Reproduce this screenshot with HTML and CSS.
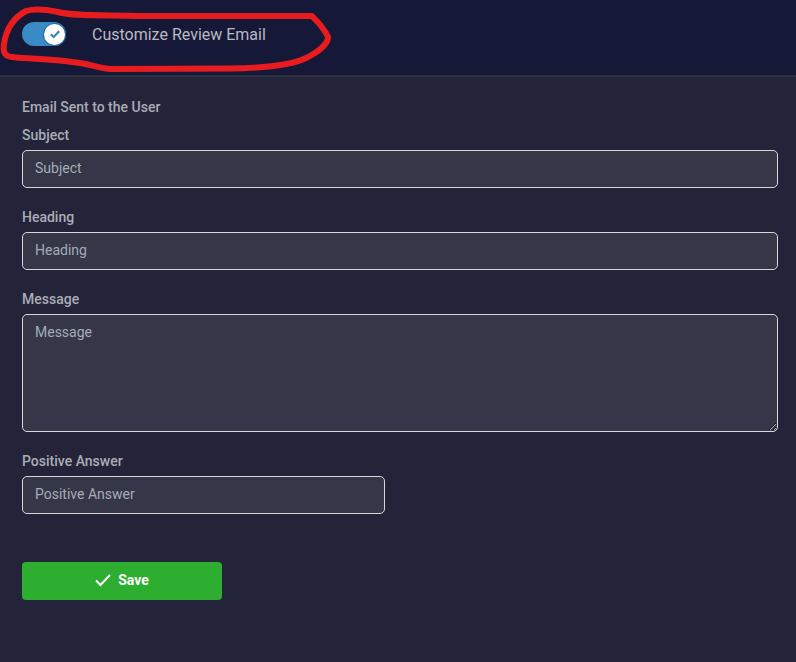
FILE: index.html
```
<!DOCTYPE html>
<html lang="en">
<head>
<meta charset="utf-8">
<title>Customize Review Email</title>
<link rel="stylesheet" href="styles.css">
</head>
<body>
<header class="top">
  <div class="switch">
    <span class="knob">
      <svg viewBox="0 0 12 12" width="12" height="12"><path d="M1.8 6.2 4.6 9 10.2 3.2" fill="none" stroke="#3a86bb" stroke-width="2.2"/></svg>
    </span>
  </div>
  <span class="top-title">Customize Review Email</span>
  <svg class="scribble" viewBox="0 0 340 76" width="340" height="76">
    <path d="M26 11C36 8 48 10 58 12C72 16 100 15 140 16L312 16C318 22 325 30 328 37C328 44 318 52 306 58C290 66 262 68 230 68.500L110 69C96 68 88 63 72 62C50 59 30 59 12 57C4 56 3 52 4 44C6 30 13 18 26 11Z" fill="none" stroke="#e81c1f" stroke-width="6" stroke-linejoin="round"/>
  </svg>
</header>
<main class="form">
  <h2 class="section">Email Sent to the User</h2>
  <div class="field">
    <label class="label" for="subject">Subject</label>
    <input class="input" id="subject" placeholder="Subject">
  </div>
  <div class="field">
    <label class="label" for="heading">Heading</label>
    <input class="input" id="heading" placeholder="Heading">
  </div>
  <div class="field">
    <label class="label" for="message">Message</label>
    <textarea class="input area" id="message" placeholder="Message"></textarea>
  </div>
  <div class="field">
    <label class="label" for="positive">Positive Answer</label>
    <input class="input half" id="positive" placeholder="Positive Answer">
  </div>
  <button class="save" type="button">
    <svg viewBox="0 0 16 14" width="16" height="14"><path d="M1 7.5 5.500 12 15 2" fill="none" stroke="#fff" stroke-width="2"/></svg>
    <span>Save</span>
  </button>
</main>
</body>
</html>
```
FILE: styles.css
```
* { box-sizing: border-box; }
html, body { margin: 0; height: 100%; }
body {
  background: #23243a;
  font-family: Roboto, "Liberation Sans", sans-serif;
  color: #abacb5;
  overflow: hidden;
}
.top {
  position: relative;
  height: 77px;
  background: #161838;
  border-bottom: 2px solid #2e2f43;
  display: flex;
  align-items: center;
  padding: 0 22px 7px;
  gap: 26px;
}
.switch {
  width: 44px;
  height: 24px;
  border-radius: 12px;
  background: #388bc4;
  display: flex;
  align-items: center;
  justify-content: flex-end;
  padding-right: 1px;
}
.knob {
  width: 21px;
  height: 21px;
  border-radius: 50%;
  background: #fff;
  box-shadow: 0 0 0 1px #2b6c9c;
  display: flex;
  align-items: center;
  justify-content: center;
}
.top-title { font-size: 16px; color: #b9bac3; }
.scribble { position: absolute; left: 0; top: 0; pointer-events: none; }
.form { padding: 22px 18px 0 22px; }
.section {
  margin: 0 0 12px;
  font-size: 14px;
  line-height: 16px;
  font-weight: 500;
  color: #abacb5;
}
.field { margin-bottom: 21px; display: flex; flex-direction: column; align-items: flex-start; }
.label {
  font-size: 14px;
  line-height: 16px;
  font-weight: 500;
  margin-bottom: 7px;
  color: #abacb5;
}
.input {
  display: block;
  width: 100%;
  height: 38px;
  background: #353647;
  border: 1px solid #d6d7dc;
  border-radius: 5px;
  padding: 0 12px 2px;
  font: 400 14px/20px Roboto, "Liberation Sans", sans-serif;
  color: #c0c1c9;
  outline: none;
}
.input::placeholder { color: #a3adb8; opacity: 1; }
.area { height: 118px; padding-top: 7px; margin: 0; resize: vertical; }
.half { width: 363px; }
.save {
  margin-top: 48px;
  width: 200px;
  height: 38px;
  border: 0;
  border-radius: 4px;
  padding: 0 0 2px;
  background: #2eae30;
  color: #fff;
  font: 700 14px Roboto, "Liberation Sans", sans-serif;
  display: flex;
  align-items: center;
  justify-content: center;
  gap: 7px;
}
```
